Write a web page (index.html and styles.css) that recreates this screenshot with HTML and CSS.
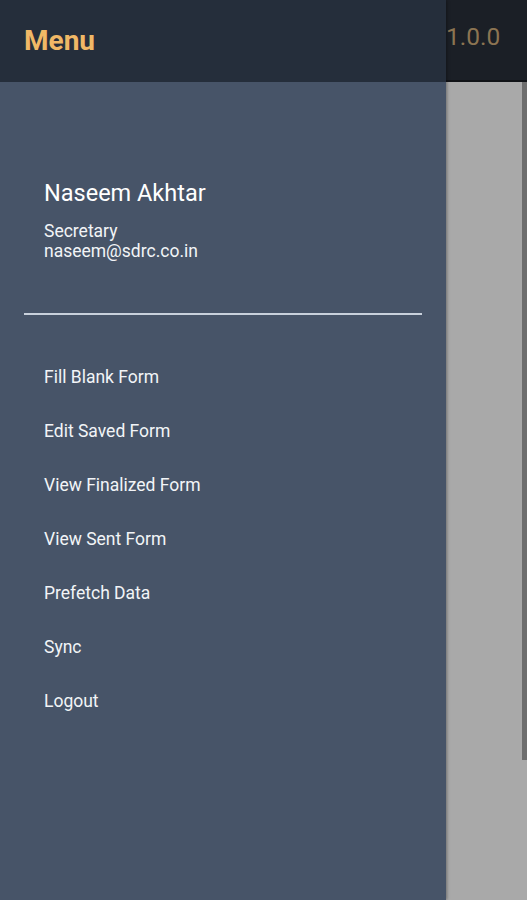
FILE: index.html
```html
<!DOCTYPE html>
<html>
<head>
<meta charset="utf-8">
<link rel="stylesheet" href="styles.css">
</head>
<body>
<div class="app">
  <div class="backdrop">
    <div class="topbar"><span class="version">1.0.0</span></div>
    <div class="content"><div class="scroll"></div></div>
  </div>
  <aside class="drawer">
    <header class="drawer-head"><h1>Menu</h1></header>
    <div class="drawer-body">
      <div class="profile">
        <div class="name">Naseem Akhtar</div>
        <div class="role">Secretary</div>
        <div class="email">naseem@sdrc.co.in</div>
      </div>
      <hr class="divider">
      <nav class="items">
        <a>Fill Blank Form</a>
        <a>Edit Saved Form</a>
        <a>View Finalized Form</a>
        <a>View Sent Form</a>
        <a>Prefetch Data</a>
        <a>Sync</a>
        <a>Logout</a>
      </nav>
    </div>
  </aside>
</div>
</body>
</html>
```
FILE: styles.css
```css
* { box-sizing: border-box; }
html, body { margin: 0; padding: 0; }
body {
  font-family: Roboto, "Noto Sans", sans-serif;
  width: 527px;
  height: 900px;
  overflow: hidden;
}
.app {
  position: relative;
  width: 527px;
  height: 900px;
}
.backdrop {
  display: flex;
  flex-direction: column;
  height: 100%;
  padding-left: 446px;
}
.topbar {
  height: 82px;
  background: #1b1f26;
  border-bottom: 2px solid #111317;
  display: flex;
  align-items: flex-start;
  padding-top: 24px;
}
.version {
  color: #8c7452;
  font-size: 24.5px;
  line-height: 26px;
}
.content {
  flex: 1;
  background: #a9a9a9;
  display: flex;
  justify-content: flex-end;
}
.scroll {
  width: 5px;
  height: 678px;
  background: #6e6e6e;
}
.drawer {
  position: absolute;
  left: 0;
  top: 0;
  width: 446px;
  height: 900px;
  display: flex;
  flex-direction: column;
  box-shadow: 1px 0 3px rgba(0,0,0,0.35);
}
.drawer-head {
  height: 82px;
  background: #252e3b;
  padding: 25px 0 0 24px;
}
.drawer-head h1 {
  margin: 0;
  color: #f0b866;
  font-size: 28px;
  line-height: 32px;
  font-weight: 700;
}
.drawer-body {
  flex: 1;
  background: #475468;
}
.profile {
  padding: 97px 0 0 44px;
  color: #ffffff;
}
.name {
  font-size: 23.5px;
  line-height: 28px;
  margin-bottom: 14px;
}
.role, .email {
  font-size: 17.5px;
  line-height: 20px;
  color: #f2f4f7;
}
.divider {
  margin: 52px 0 0 24px;
  width: 398px;
  height: 2px;
  border: 0;
  background: #c9d1dc;
}
.items {
  display: flex;
  flex-direction: column;
  padding: 52px 0 0 44px;
  gap: 34px;
}
.items a {
  color: #f2f4f7;
  font-size: 17.5px;
  line-height: 20px;
}
```
